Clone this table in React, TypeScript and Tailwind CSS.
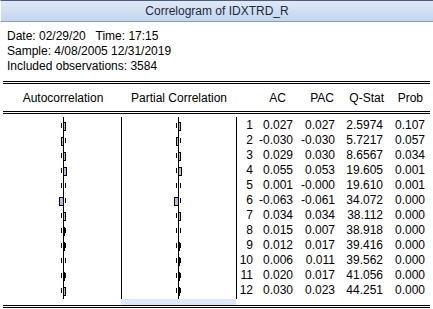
import React from "react";

type Row = { lag: number; ac: string; pac: string; q: string; prob: string };

const rows: Row[] = [
  { lag: 1, ac: "0.027", pac: "0.027", q: "2.5974", prob: "0.107" },
  { lag: 2, ac: "-0.030", pac: "-0.030", q: "5.7217", prob: "0.057" },
  { lag: 3, ac: "0.029", pac: "0.030", q: "8.6567", prob: "0.034" },
  { lag: 4, ac: "0.055", pac: "0.053", q: "19.605", prob: "0.001" },
  { lag: 5, ac: "0.001", pac: "-0.000", q: "19.610", prob: "0.001" },
  { lag: 6, ac: "-0.063", pac: "-0.061", q: "34.072", prob: "0.000" },
  { lag: 7, ac: "0.034", pac: "0.034", q: "38.112", prob: "0.000" },
  { lag: 8, ac: "0.015", pac: "0.007", q: "38.918", prob: "0.000" },
  { lag: 9, ac: "0.012", pac: "0.017", q: "39.416", prob: "0.000" },
  { lag: 10, ac: "0.006", pac: "0.011", q: "39.562", prob: "0.000" },
  { lag: 11, ac: "0.020", pac: "0.017", q: "41.056", prob: "0.000" },
  { lag: 12, ac: "0.030", pac: "0.023", q: "44.251", prob: "0.000" },
];

// bar chart for one correlogram column
function Bars({ values, axis, width }: { values: number[]; axis: number; width: number }) {
  return (
    <svg width={width} height={182} shapeRendering="crispEdges" className="block">
      <line x1={axis + 0.5} y1={0} x2={axis + 0.5} y2={182} stroke="#000" />
      {values.map((v, i) => {
        const top = 1 + i * 15;
        const w = Math.round(Math.abs(v) * 59);
        const x = v < 0 ? axis - w : axis;
        return (
          <g key={i}>
            <line x1={axis - 1.5} y1={top + 5} x2={axis - 1.5} y2={top + 10} stroke="#000" />
            <line x1={axis + 2.5} y1={top + 5} x2={axis + 2.5} y2={top + 10} stroke="#000" />
            {w > 0 && (
              <rect
                x={x + 0.5}
                y={top + 4.5}
                width={w}
                height={8}
                fill={w === 1 ? "#000" : "#b4bcd9"}
                stroke="#000"
              />
            )}
          </g>
        );
      })}
    </svg>
  );
}

const DoubleLine = () => <div className="h-[3px] border-y border-black" />;

export default function App() {
  return (
    <div
      className="w-[433px] h-[309px] bg-white overflow-hidden text-[12px] text-black"
      style={{ fontFamily: '"Liberation Sans", Arial, sans-serif' }}
    >
      {/* barre de titre */}
      <div className="h-[22px] border-t border-b border-t-[#4b5d79] border-b-[#8d9db4] border-l border-l-white bg-gradient-to-b from-[#dfe8f5] to-[#c3d6ef] text-center leading-[20px] text-[#1b2a41]">
        Correlogram of IDXTRD_R
      </div>

      {/* infos */}
      <div className="pl-[7px] pt-[7px] leading-[15px] whitespace-pre">
        <div>Date: 02/29/20   Time: 17:15</div>
        <div>Sample: 4/08/2005 12/31/2019</div>
        <div>Included observations: 3584</div>
      </div>

      <div className="mx-[3px] mt-[7px]">
        <DoubleLine />

        {/* en-têtes */}
        <div className="flex h-[27px] items-center">
          <div className="w-[119px] text-center pl-[1px]">Autocorrelation</div>
          <div className="w-[116px] text-center pr-[2px]">Partial Correlation</div>
          <div className="grid grid-cols-[16px_40px_42px_48px_42px] ml-[1px]">
            <div />
            <div className="text-right pr-[9px]">AC</div>
            <div className="text-right pr-[3px]">PAC</div>
            <div className="text-right pr-[1px]">Q-Stat</div>
            <div className="text-right pr-[4px]">Prob</div>
          </div>
        </div>

        <DoubleLine />

        {/* corps */}
        <div className="pt-[3px]">
          <div className="flex h-[182px]">
            <div className="w-[119px] border-r border-black">
              <Bars values={rows.map((r) => parseFloat(r.ac))} axis={60} width={118} />
            </div>
            <div className="w-[115px] border-r border-black">
              <Bars values={rows.map((r) => parseFloat(r.pac))} axis={56} width={114} />
            </div>
            <div className="pt-[1px]">
              {rows.map((r) => (
                <div key={r.lag} className="grid grid-cols-[16px_40px_42px_48px_42px] h-[15px] leading-[15px] text-right">
                  <div>{r.lag}</div>
                  <div>{r.ac}</div>
                  <div>{r.pac}</div>
                  <div>{r.q}</div>
                  <div>{r.prob}</div>
                </div>
              ))}
            </div>
          </div>
          <div className="h-[6px]">
            <div className="ml-[118px] w-[115px] h-full bg-[#dde8fb]" />
          </div>
        </div>

        <DoubleLine />
      </div>
    </div>
  );
}
